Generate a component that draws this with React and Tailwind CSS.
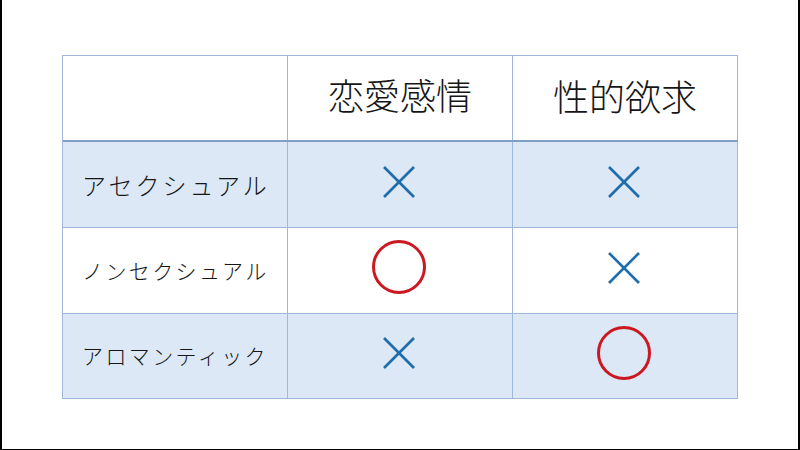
import React from "react";

const font = { fontFamily: '"Noto Sans CJK JP", "Noto Sans", sans-serif' };

function Cross() {
  return (
    <svg width="34" height="34" viewBox="0 0 34 34" className="-mt-[6px] -ml-[2px]">
      <line x1="2" y1="2" x2="32" y2="32" stroke="#1f6dab" strokeWidth="2.6" />
      <line x1="32" y1="2" x2="2" y2="32" stroke="#1f6dab" strokeWidth="2.6" />
    </svg>
  );
}

function Circle() {
  return (
    <svg width="56" height="56" viewBox="0 0 56 56" className="-mt-[7px] -ml-[2px]">
      <circle cx="28" cy="28" r="25.5" fill="none" stroke="#cc1820" strokeWidth="3" />
    </svg>
  );
}

const rows = [
  { label: "アセクシュアル", cls: "text-[24px] tracking-[3px]", a: "x", b: "x", fill: true },
  { label: "ノンセクシュアル", cls: "text-[21px] tracking-[2.4px]", a: "o", b: "x", fill: false },
  { label: "アロマンティック", cls: "text-[21px] tracking-[2.4px]", a: "x", b: "o", fill: true },
];

function Mark({ v }) {
  return v === "x" ? <Cross /> : <Circle />;
}

export default function App() {
  return (
    <div
      className="w-[800px] h-[450px] bg-white border-l-2 border-r-2 border-b border-black box-border pl-[60px] pt-[55px]"
      style={font}
    >
      <div className="w-[676px] border-l border-t border-[#9db8d9] text-[#161616]">
        <div className="flex h-[86px] border-b-2 border-[#819fc3]">
          <div className="w-[225px] border-r border-[#9db8d9]" />
          <div className="w-[225px] border-r border-[#9db8d9] flex items-center justify-center text-[36px] font-light pb-[9px]">
            恋愛感情
          </div>
          <div className="w-[225px] border-r border-[#9db8d9] flex items-center justify-center text-[36px] font-light pb-[7px]">
            性的欲求
          </div>
        </div>
        {rows.map((r, i) => (
          <div
            key={i}
            className={`flex ${i === 2 ? "h-[85px]" : "h-[86px]"} border-b border-[#9db8d9] ${r.fill ? "bg-[#dce8f5]" : "bg-white"}`}
          >
            <div className={`w-[225px] border-r border-[#9db8d9] flex items-center pl-[19px] font-light whitespace-nowrap ${r.cls}`}>
              {r.label}
            </div>
            <div className="w-[225px] border-r border-[#9db8d9] flex items-center justify-center">
              <Mark v={r.a} />
            </div>
            <div className="w-[225px] border-r border-[#9db8d9] flex items-center justify-center">
              <Mark v={r.b} />
            </div>
          </div>
        ))}
      </div>
    </div>
  );
}
